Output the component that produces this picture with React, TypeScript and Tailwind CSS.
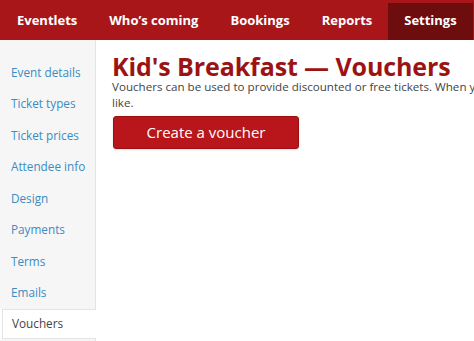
import React from "react";

const navItems = ["Eventlets", "Who’s coming", "Bookings", "Reports", "Settings"];
const sideItems = [
  "Event details",
  "Ticket types",
  "Ticket prices",
  "Attendee info",
  "Design",
  "Payments",
  "Terms",
  "Emails",
];

export default function App() {
  return (
    <div className="w-[474px] h-[341px] overflow-hidden bg-white" style={{ fontFamily: '"Open Sans", sans-serif' }}>
      <div className="h-[40px] bg-[#a8161a] flex items-end pl-[1px]">
        {navItems.map((n) => (
          <div
            key={n}
            className={`h-[37px] px-[16px] flex items-center pb-[1px] text-white font-bold text-[13px] whitespace-nowrap ${
              n === "Settings" ? "bg-[#6e0d0d]" : ""
            }`}
          >
            {n}
          </div>
        ))}
      </div>
      <div className="flex">
        <div className="w-[96px] shrink-0 h-[301px] flex flex-col">
          <div className="bg-[#f6f6f6] border-r border-[#e4e4e4] pt-[17px] flex flex-col">
            {sideItems.map((s) => (
              <div key={s} className="h-[31.5px] pl-[11px] flex items-center text-[11.75px] text-[#3b8cc0] whitespace-nowrap">
                {s}
              </div>
            ))}
          </div>
          <div className="h-[30px] ml-[2px] bg-white border border-r-0 border-[#e4e4e4] pl-[9px] flex items-center text-[11.75px] text-[#444] relative z-10">
            Vouchers
          </div>
          <div className="flex-1 bg-[#f6f6f6] border-r border-[#e4e4e4]" />
        </div>
        <div className="pl-[16px] pt-[13px] flex-1 min-w-0">
          <div className="text-[25px] leading-[26px] font-bold text-[#9c1313] whitespace-nowrap tracking-[-0.1px]">
            Kid's Breakfast — Vouchers
          </div>
          <div className="text-[11.6px] leading-[16px] text-[#444]">
            <div className="whitespace-nowrap">
              Vouchers can be used to provide discounted or free tickets. When you create a voucher you can choose whoever you
            </div>
            <div>like.</div>
          </div>
          <button className="mt-[5px] ml-[1px] w-[186px] h-[33px] rounded-[3px] bg-[#b8161a] border border-[#9a1010] text-white text-[15px] flex items-center justify-center shadow-sm">
            Create a voucher
          </button>
        </div>
      </div>
    </div>
  );
}
